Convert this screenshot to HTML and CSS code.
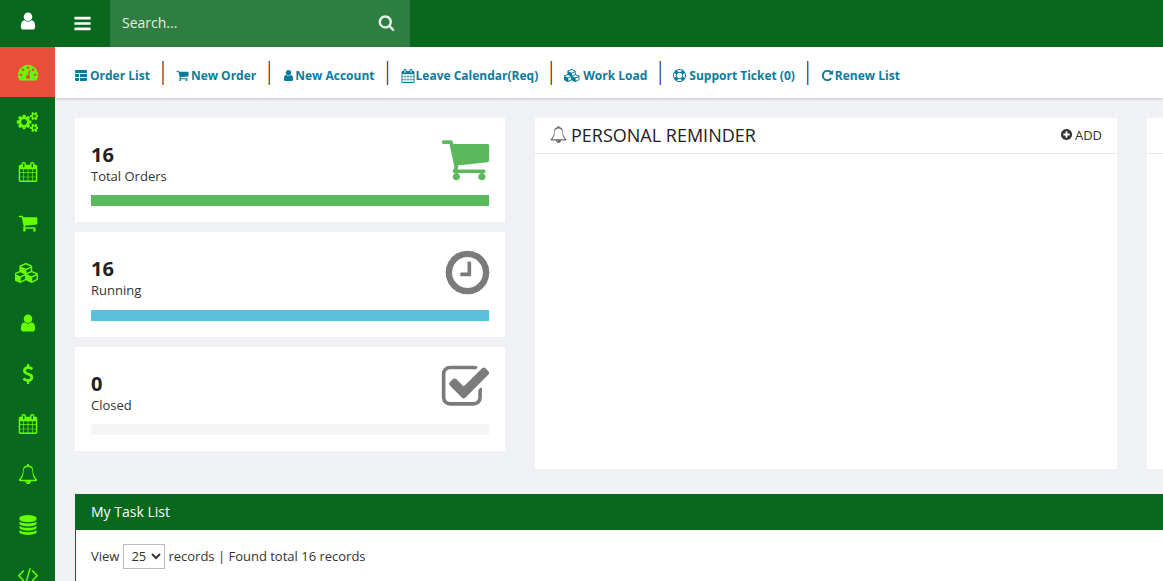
FILE: index.html
```html
<!DOCTYPE html>
<html lang="en">
<head>
    <meta charset="UTF-8">
    <title>Dashboard</title>
    <link rel="stylesheet" href="styles.css">
</head>
<body>

    <!-- icon set -->
    <svg class="icon-defs" xmlns="http://www.w3.org/2000/svg">
        <symbol id="i-user" viewBox="0 0 1792 1792"><path d="M1536 1399q0 109-62.5 187t-150.5 78h-854q-88 0-150.5-78t-62.5-187q0-85 8.5-160.5t31.5-152 58.5-131 94-89 134.5-34.5q131 128 313 128t313-128q76 0 134.5 34.5t94 89 58.5 131 31.5 152 8.5 160.5zm-256-887q0 159-112.5 271.5t-271.5 112.5-271.5-112.5-112.5-271.5 112.5-271.5 271.5-112.5 271.5 112.5 112.5 271.5z"/></symbol>
        <symbol id="i-bars" viewBox="0 0 1792 1792"><path d="M1664 1344v128q0 26-19 45t-45 19h-1408q-26 0-45-19t-19-45v-128q0-26 19-45t45-19h1408q26 0 45 19t19 45zm0-512v128q0 26-19 45t-45 19h-1408q-26 0-45-19t-19-45v-128q0-26 19-45t45-19h1408q26 0 45 19t19 45zm0-512v128q0 26-19 45t-45 19h-1408q-26 0-45-19t-19-45v-128q0-26 19-45t45-19h1408q26 0 45 19t19 45z"/></symbol>
        <symbol id="i-search" viewBox="0 0 1792 1792"><path d="M1216 832q0-185-131.5-316.5t-316.5-131.5-316.5 131.5-131.5 316.5 131.5 316.5 316.5 131.5 316.5-131.5 131.5-316.5zm512 832q0 52-38 90t-90 38q-54 0-90-38l-343-342q-179 124-399 124-143 0-273.5-55.5t-225-150-150-225-55.5-273.5 55.5-273.5 150-225 225-150 273.5-55.5 273.5 55.5 225 150 150 225 55.5 273.5q0 220-124 399l343 343q37 37 37 90z"/></symbol>
        <symbol id="i-cart" viewBox="0 0 1792 1792"><path d="M704 1536q0 52-38 90t-90 38-90-38-38-90 38-90 90-38 90 38 38 90zm896 0q0 52-38 90t-90 38-90-38-38-90 38-90 90-38 90 38 38 90zm128-1088v512q0 24-16.5 42.5t-40.5 21.5l-1044 122q13 60 13 70 0 16-24 64h920q26 0 45 19t19 45-19 45-45 19h-1024q-26 0-45-19t-19-45q0-11 8-31.5t16-36 21.5-40 15.5-29.5l-177-823h-204q-26 0-45-19t-19-45 19-45 45-19h256q16 0 28.5 6.5t19.5 15.5 13 24.5 8 26 5.5 29.5 4.5 26h1201q26 0 45 19t19 45z"/></symbol>
        <symbol id="i-calendar" viewBox="0 0 1792 1792"><path d="M192 1664h288v-288h-288v288zm352 0h320v-288h-320v288zm-352-352h288v-320h-288v320zm352 0h320v-320h-320v320zm-352-384h288v-288h-288v288zm736 736h320v-288h-320v288zm-384-736h320v-288h-320v288zm768 736h288v-288h-288v288zm-384-352h320v-320h-320v320zm-352-864v-288q0-13-9.5-22.5t-22.5-9.5h-64q-13 0-22.5 9.5t-9.5 22.5v288q0 13 9.5 22.5t22.5 9.5h64q13 0 22.5-9.5t9.5-22.5zm736 864h288v-320h-288v320zm-384-384h320v-288h-320v288zm384 0h288v-288h-288v288zm32-480v-288q0-13-9.5-22.5t-22.5-9.5h-64q-13 0-22.5 9.5t-9.5 22.5v288q0 13 9.5 22.5t22.5 9.5h64q13 0 22.5-9.5t9.5-22.5zm384-64v1280q0 52-38 90t-90 38h-1408q-52 0-90-38t-38-90v-1280q0-52 38-90t90-38h128v-96q0-66 47-113t113-47h64q66 0 113 47t47 113v96h384v-96q0-66 47-113t113-47h64q66 0 113 47t47 113v96h128q52 0 90 38t38 90z"/></symbol>
        <symbol id="i-check" viewBox="0 0 1792 1792"><path d="M1472 930v318q0 119-84.5 203.5t-203.5 84.5h-832q-119 0-203.5-84.5t-84.5-203.5v-832q0-119 84.5-203.5t203.5-84.5h832q63 0 117 25 15 7 18 23 3 17-9 29l-49 49q-10 10-23 10-3 0-9-2-23-6-45-6h-832q-66 0-113 47t-47 113v832q0 66 47 113t113 47h832q66 0 113-47t47-113v-254q0-13 9-22l64-64q10-10 23-10 6 0 12 3 20 8 20 29zm231-489l-814 814q-24 24-57 24t-57-24l-430-430q-24-24-24-57t24-57l110-110q24-24 57-24t57 24l263 263 647-647q24-24 57-24t57 24l110 110q24 24 24 57t-24 57z"/></symbol>
        <symbol id="i-clock" viewBox="0 0 1792 1792"><path d="M1024 544v448q0 14-9 23t-23 9h-320q-14 0-23-9t-9-23v-64q0-14 9-23t23-9h224v-352q0-14 9-23t23-9h64q14 0 23 9t9 23zm416 352q0-148-73-273t-198-198-273-73-273 73-198 198-73 273 73 273 198 198 273 73 273-73 198-198 73-273zm224 0q0 209-103 385.5t-279.5 279.5-385.5 103-385.5-103-279.5-279.5-103-385.5 103-385.5 279.5-279.5 385.5-103 385.5 103 279.5 279.5 103 385.5z"/></symbol>
        <symbol id="i-bell" viewBox="0 0 1792 1792"><path d="M912 1696q0-16-16-16-59 0-101.5-42.5t-42.5-101.5q0-16-16-16t-16 16q0 73 51.5 124.5t124.5 51.5q16 0 16-16zm-666-288h1300q-266-300-266-832 0-51-24-105t-69-103-121.5-80.5-169.5-31.5-169.5 31.5-121.5 80.5-69 103-24 105q0 532-266 832zm1482 0q0 52-38 90t-90 38h-448q0 106-75 181t-181 75-181-75-75-181h-448q-52 0-90-38t-38-90q190-161 287-397.5t97-498.5q0-165 96-262t264-117q-8-18-8-37 0-40 28-68t68-28 68 28 28 68q0 19-8 37 168 20 264 117t96 262q0 262 97 498.5t287 397.5z"/></symbol>
        <symbol id="i-database" viewBox="0 0 1792 1792"><path d="M896 768q237 0 443-43t325-127v170q0 69-103 128t-280 93.5-385 34.5-385-34.5-280-93.5-103-128v-170q119 84 325 127t443 43zm0 768q237 0 443-43t325-127v170q0 69-103 128t-280 93.5-385 34.5-385-34.5-280-93.5-103-128v-170q119 84 325 127t443 43zm0-384q237 0 443-43t325-127v170q0 69-103 128t-280 93.5-385 34.5-385-34.5-280-93.5-103-128v-170q119 84 325 127t443 43zm0-1152q208 0 385 34.5t280 93.5 103 128v128q0 69-103 128t-280 93.5-385 34.5-385-34.5-280-93.5-103-128v-128q0-69 103-128t280-93.5 385-34.5z"/></symbol>
        <symbol id="i-code" viewBox="0 0 1792 1792"><path d="M553 1399l-50 50q-10 10-23 10t-23-10l-466-466q-10-10-10-23t10-23l466-466q10-10 23-10t23 10l50 50q10 10 10 23t-10 23l-393 393 393 393q10 10 10 23t-10 23zm591-1067l-373 1291q-4 13-15.5 19.5t-23.5 2.5l-62-17q-13-4-19.5-15.5t-2.5-24.5l373-1291q4-13 15.5-19.5t23.5-2.5l62 17q13 4 19.5 15.5t2.5 24.5zm657 651l-466 466q-10 10-23 10t-23-10l-50-50q-10-10-10-23t10-23l393-393-393-393q-10-10-10-23t10-23l50-50q10-10 23-10t23 10l466 466q10 10 10 23t-10 23z"/></symbol>
        <symbol id="i-usd" viewBox="0 0 1792 1792"><path d="M1362 1185q0 153-99.5 263.5t-258.5 136.5v175q0 14-9 23t-23 9h-135q-13 0-22.5-9.5t-9.5-22.5v-175q-66-9-127.5-31t-101.5-44.5-74-48-46.5-37.5-17.5-18q-17-21-2-41l103-135q7-10 23-12 15-2 24 9l2 2q113 99 243 125 37 8 74 8 81 0 142.5-43t61.5-122q0-28-15-53t-33.5-42-58.5-37.5-66-32-80-32.5q-39-16-61.5-25t-61.5-26.5-62.5-31-56.5-35.5-53.5-42.5-43.5-49-35.5-58-21-66.5-8.5-78q0-138 98-242t255-134v-180q0-13 9.5-22.5t22.5-9.5h135q14 0 23 9t9 23v176q57 6 110.5 23t87 33.5 63.5 37.5 39 29 15 14q17 18 5 38l-81 146q-8 15-23 16-14 3-27-7-3-3-14.5-12t-39-26.5-58.5-32-74.5-26-85.5-11.5q-95 0-155 43t-60 111q0 26 8.5 48t29.5 41.5 39.5 33 56 31 60.5 27 70 27.5q53 20 81 31.5t76 35 75.5 42.5 62 50 53 63.5 31.5 76.5 13 94z"/></symbol>
        <symbol id="i-repeat" viewBox="0 0 1792 1792"><path d="M1664 256v448q0 26-19 45t-45 19h-448q-42 0-59-40-17-39 14-69l138-138q-148-137-349-137-104 0-198.5 40.5t-163.5 109.5-109.5 163.5-40.5 198.5 40.5 198.5 109.5 163.5 163.5 109.5 198.5 40.5q119 0 225-52t179-147q7-10 23-12 15 0 25 9l137 138q9 8 9.5 20.5t-7.5 22.5q-109 132-264 204.5t-327 72.5q-156 0-298-61t-245-164-164-245-61-298 61-298 164-245 245-164 298-61q147 0 284.5 55.5t244.5 156.5l130-129q29-31 70-14 39 17 39 59z"/></symbol>
        <symbol id="i-plus" viewBox="0 0 1792 1792"><path d="M1344 960v-128q0-26-19-45t-45-19h-256v-256q0-26-19-45t-45-19h-128q-26 0-45 19t-19 45v256h-256q-26 0-45 19t-19 45v128q0 26 19 45t45 19h256v256q0 26 19 45t45 19h128q26 0 45-19t19-45v-256h256q26 0 45-19t19-45zm320-64q0 209-103 385.5t-279.5 279.5-385.5 103-385.5-103-279.5-279.5-103-385.5 103-385.5 279.5-279.5 385.5-103 385.5 103 279.5 279.5 103 385.5z"/></symbol>
        <symbol id="i-ring" viewBox="0 0 1792 1792"><path d="M896 0q182 0 348 71t286 191 191 286 71 348-71 348-191 286-286 191-348 71-348-71-286-191-191-286-71-348 71-348 191-286 286-191 348-71zm0 128q-190 0-361 90l194 194q82-28 167-28t167 28l194-194q-171-90-361-90zm-678 1129l194-194q-28-82-28-167t28-167l-194-194q-90 171-90 361t90 361zm678 407q190 0 361-90l-194-194q-82 28-167 28t-167-28l-194 194q171 90 361 90zm0-384q159 0 271.5-112.5t112.5-271.5-112.5-271.5-271.5-112.5-271.5 112.5-112.5 271.5 112.5 271.5 271.5 112.5zm484-217l194 194q90-171 90-361t-90-361l-194 194q28 82 28 167t-28 167z"/></symbol>
        <symbol id="i-cubes" viewBox="0 0 2048 1792"><path d="M512 1632l384-192v-314l-384 164v342zm-64-454l404-173-404-173-404 173zm1088 454l384-192v-314l-384 164v342zm-64-454l404-173-404-173-404 173zm-448-293l384-165v-266l-384 164v267zm-64-379l441-189-441-189-441 189zm1088 518v416q0 36-19 67t-52 47l-448 224q-25 14-57 14t-57-14l-448-224q-4-2-7-4-2 2-7 4l-448 224q-25 14-57 14t-57-14l-448-224q-33-16-52-47t-19-67v-416q0-38 21.5-70t56.5-48l434-186v-400q0-38 21.5-70t56.5-48l448-192q23-10 50-10t50 10l448 192q35 16 56.5 48t21.5 70v400l434 186q36 16 57 48t21 70z"/></symbol>
        <symbol id="i-cogs" viewBox="0 0 1920 1792"><path d="M960 896q0-106-75-181t-181-75-181 75-75 181 75 181 181 75 181-75 75-181zm768 512q0-52-38-90t-90-38-90 38-38 90q0 53 37.5 90.5t90.5 37.5 90.5-37.5 37.5-90.5zm0-1024q0-52-38-90t-90-38-90 38-38 90q0 53 37.5 90.5t90.5 37.5 90.5-37.5 37.5-90.5zm-384 421v185q0 10-7 19.5t-16 10.5l-155 24q-11 35-32 76 34 48 90 115 7 11 7 20 0 12-7 19-23 30-82.5 89.5t-78.5 59.5q-11 0-21-7l-115-90q-37 19-77 31-11 108-23 155-7 24-30 24h-186q-11 0-20-7.5t-10-17.5l-23-153q-34-10-75-31l-118 89q-7 7-20 7-11 0-21-8-144-133-144-160 0-9 7-19 10-14 41-53t47-61q-23-44-35-82l-152-24q-10-1-17-9.5t-7-19.5v-185q0-10 7-19.5t16-10.5l155-24q11-35 32-76-34-48-90-115-7-11-7-20 0-12 7-20 22-30 82-89t79-59q11 0 21 7l115 90q34-18 77-32 11-108 23-154 7-24 30-24h186q11 0 20 7.5t10 17.5l23 153q34 10 75 31l118-89q8-7 20-7 11 0 21 8 144 133 144 160 0 8-7 19-12 16-42 54t-45 60q23 48 34 82l152 23q10 2 17 10.5t7 19.5zm640 533v140q0 16-149 31-12 27-30 52 51 113 51 138 0 4-4 7-122 71-124 71-8 0-46-47t-52-68q-20 2-30 2t-30-2q-14 21-52 68t-46 47q-2 0-124-71-4-3-4-7 0-25 51-138-18-25-30-52-149-15-149-31v-140q0-16 149-31 13-29 30-52-51-113-51-138 0-4 4-7 4-2 35-20t59-34 30-16q8 0 46 46.5t52 67.5q20-2 30-2t30 2q51-71 92-112l6-2q4 0 124 70 4 3 4 7 0 25-51 138 17 23 30 52 149 15 149 31zm0-1024v140q0 16-149 31-12 27-30 52 51 113 51 138 0 4-4 7-122 71-124 71-8 0-46-47t-52-68q-20 2-30 2t-30-2q-14 21-52 68t-46 47q-2 0-124-71-4-3-4-7 0-25 51-138-18-25-30-52-149-15-149-31v-140q0-16 149-31 13-29 30-52-51-113-51-138 0-4 4-7 4-2 35-20t59-34 30-16q8 0 46 46.5t52 67.5q20-2 30-2t30 2q51-71 92-112l6-2q4 0 124 70 4 3 4 7 0 25-51 138 17 23 30 52 149 15 149 31z"/></symbol>
        <symbol id="i-dash" viewBox="0 0 1792 1792"><path d="M384 1152q0-53-37.5-90.5t-90.5-37.5-90.5 37.5-37.5 90.5 37.5 90.5 90.5 37.5 90.5-37.5 37.5-90.5zm192-448q0-53-37.5-90.5t-90.5-37.5-90.5 37.5-37.5 90.5 37.5 90.5 90.5 37.5 90.5-37.5 37.5-90.5zm428 481l101-382q6-26-7.5-48.5t-38.5-29.5-48 6.5-30 39.5l-101 382q-60 5-107 43.5t-63 98.5q-20 77 20 146t117 89 146-20 89-117q16-60-6-117t-72-91zm660-33q0-53-37.5-90.5t-90.5-37.5-90.5 37.5-37.5 90.5 37.5 90.5 90.5 37.5 90.5-37.5 37.5-90.5zm-640-640q0-53-37.5-90.5t-90.5-37.5-90.5 37.5-37.5 90.5 37.5 90.5 90.5 37.5 90.5-37.5 37.5-90.5zm448 192q0-53-37.5-90.5t-90.5-37.5-90.5 37.5-37.5 90.5 37.5 90.5 90.5 37.5 90.5-37.5 37.5-90.5zm320 448q0 261-141 483-19 29-54 29h-1402q-35 0-54-29-141-221-141-483 0-182 71-348t191-286 286-191 348-71 348 71 286 191 191 286 71 348z"/></symbol>
        <symbol id="i-table" viewBox="0 0 12 11"><path d="M0 1q0-1 1-1h10q1 0 1 1v2h-12zM0 4h4v3h-4zM5 4h7v3h-7zM0 8h4v3h-3q-1 0-1-1zM5 8h7v2q0 1-1 1h-6z"/></symbol>
    </svg>

    <div class="topbar">
        <div class="brand"><svg class="ico ico-brand"><use href="#i-user"/></svg></div>
        <div class="menu-btn"><svg class="ico ico-bars"><use href="#i-bars"/></svg></div>
        <div class="search">
            <span>Search...</span>
            <svg class="ico ico-search"><use href="#i-search"/></svg>
        </div>
    </div>

    <div class="main">
        <div class="sidebar">
            <div class="side-item active"><svg class="ico"><use href="#i-dash"/></svg></div>
            <div class="side-item"><svg class="ico ico-cogs"><use href="#i-cogs"/></svg></div>
            <div class="side-item"><svg class="ico"><use href="#i-calendar"/></svg></div>
            <div class="side-item"><svg class="ico"><use href="#i-cart"/></svg></div>
            <div class="side-item"><svg class="ico ico-cubes"><use href="#i-cubes"/></svg></div>
            <div class="side-item"><svg class="ico"><use href="#i-user"/></svg></div>
            <div class="side-item"><svg class="ico"><use href="#i-usd"/></svg></div>
            <div class="side-item"><svg class="ico"><use href="#i-calendar"/></svg></div>
            <div class="side-item"><svg class="ico"><use href="#i-bell"/></svg></div>
            <div class="side-item"><svg class="ico"><use href="#i-database"/></svg></div>
            <div class="side-item"><svg class="ico"><use href="#i-code"/></svg></div>
        </div>

        <div class="content">
            <div class="subnav">
                <a class="sub-link"><svg class="ico ico-table"><use href="#i-table"/></svg>Order List</a>
                <span class="sep">|</span>
                <a class="sub-link"><svg class="ico"><use href="#i-cart"/></svg>New Order</a>
                <span class="sep">|</span>
                <a class="sub-link"><svg class="ico ico-tight"><use href="#i-user"/></svg>New Account</a>
                <span class="sep">|</span>
                <a class="sub-link"><svg class="ico ico-cal"><use href="#i-calendar"/></svg>Leave Calendar(Req)</a>
                <span class="sep">|</span>
                <a class="sub-link"><svg class="ico ico-wide"><use href="#i-cubes"/></svg>Work Load</a>
                <span class="sep">|</span>
                <a class="sub-link"><svg class="ico ico-ring"><use href="#i-ring"/></svg>Support Ticket (0)</a>
                <span class="sep">|</span>
                <a class="sub-link"><svg class="ico ico-repeat"><use href="#i-repeat"/></svg>Renew List</a>
            </div>

            <div class="dash-row">
                <div class="stats">
                    <div class="stat-card">
                        <div class="stat-top">
                            <div>
                                <div class="stat-num">16</div>
                                <div class="stat-label">Total Orders</div>
                            </div>
                            <svg class="ico stat-icon green"><use href="#i-cart"/></svg>
                        </div>
                        <div class="bar bar-green"></div>
                    </div>
                    <div class="stat-card">
                        <div class="stat-top">
                            <div>
                                <div class="stat-num">16</div>
                                <div class="stat-label">Running</div>
                            </div>
                            <svg class="ico stat-icon clock"><use href="#i-clock"/></svg>
                        </div>
                        <div class="bar bar-blue"></div>
                    </div>
                    <div class="stat-card">
                        <div class="stat-top">
                            <div>
                                <div class="stat-num">0</div>
                                <div class="stat-label">Closed</div>
                            </div>
                            <svg class="ico stat-icon"><use href="#i-check"/></svg>
                        </div>
                        <div class="bar"></div>
                    </div>
                </div>

                <div class="panel">
                    <div class="panel-head">
                        <h2><svg class="ico ico-bell"><use href="#i-bell"/></svg>PERSONAL REMINDER</h2>
                        <span class="add"><svg class="ico"><use href="#i-plus"/></svg>ADD</span>
                    </div>
                </div>

                <div class="panel panel-next">
                    <div class="panel-head"></div>
                </div>
            </div>

            <div class="task-box">
                <div class="task-head">My Task List</div>
                <div class="task-body">
                    <span>View</span>
                    <select class="task-select"><option>25</option></select>
                    <span>records | Found total 16 records</span>
                </div>
            </div>
        </div>
    </div>

</body>
</html>
```

FILE: styles.css
```css
* {
    box-sizing: border-box;
}

html,
body {
    height: 581px;
    overflow: hidden;
}

body {
    margin: 0;
    font-family: "Open Sans", sans-serif;
    font-size: 13px;
    color: #333;
    background-color: #f0f1f5;
}

.icon-defs {
    display: none;
}

.ico {
    display: block;
    flex: none;
    fill: currentColor;
}

/* top bar */
.topbar {
    display: flex;
    height: 47px;
    background-color: #08681d;
    color: #fff;
}

.brand {
    width: 55px;
    display: flex;
    align-items: center;
    justify-content: center;
}

.ico-brand {
    width: 20px;
    height: 20px;
    margin-top: -5px;
}

.menu-btn {
    width: 55px;
    display: flex;
    align-items: center;
    justify-content: center;
}

.ico-bars {
    width: 19px;
    height: 19px;
}

.search {
    width: 300px;
    padding: 0 15px 2px 12px;
    display: flex;
    align-items: center;
    justify-content: space-between;
    background-color: #2e7e41;
    font-size: 14px;
    color: #e4efe6;
}

.ico-search {
    width: 17px;
    height: 17px;
}

.main {
    display: flex;
    height: 534px;
}

/* sidebar */
.sidebar {
    width: 55px;
    flex: none;
    background-color: #08681d;
    color: #66ff00;
}

.side-item {
    height: 50.3px;
    display: flex;
    align-items: center;
    justify-content: center;
}

.side-item .ico {
    width: 20px;
    height: 20px;
}

.side-item .ico-cogs {
    width: 22px;
    height: 22px;
    margin-right: 2px;
}

.side-item .ico-cubes {
    width: 23px;
    height: 20px;
    margin-right: 2px;
}

.side-item.active {
    height: 50px;
    background-color: #e94e3d;
}

/* links under the top bar */
.content {
    flex: 1;
    min-width: 0;
    overflow: hidden;
}

.subnav {
    height: 51px;
    display: flex;
    align-items: center;
    padding: 6px 0 0 20px;
    background-color: #fff;
    box-shadow: 0 1px 3px rgba(0, 0, 0, 0.2);
}

.sub-link {
    display: flex;
    align-items: center;
    font-size: 12px;
    font-weight: 700;
    color: #0b7c9c;
    white-space: nowrap;
}

.sub-link .ico {
    width: 13px;
    height: 13px;
    margin-right: 2px;
}

.sub-link .ico-table {
    width: 12px;
    height: 11px;
    margin-right: 3px;
}

.sub-link .ico-tight {
    margin-right: 0;
}

.sub-link .ico-cal {
    width: 14px;
    height: 14px;
    margin-right: 1px;
}

.sub-link .ico-wide {
    width: 16px;
    margin-right: 3px;
}

.sub-link .ico-ring {
    margin-right: 3px;
}

.sub-link .ico-repeat {
    margin-right: 1px;
}

.sep {
    width: 26px;
    margin-top: -13px;
    text-align: center;
    font-size: 24px;
    font-weight: 300;
    line-height: 25px;
    color: #222;
}

/* stat cards and panels */
.dash-row {
    display: flex;
    align-items: flex-start;
    padding: 20px 0 0 20px;
}

.stats {
    width: 430px;
    flex: none;
    display: flex;
    flex-direction: column;
    gap: 10px;
}

.stat-card {
    height: 104.4px;
    padding: 16px 16px 0;
    background-color: #fff;
}

.stat-top {
    height: 61.2px;
    display: flex;
    justify-content: space-between;
    align-items: flex-start;
}

.stat-num {
    margin-top: 8px;
    font-size: 20px;
    font-weight: 700;
    line-height: 25px;
    color: #222;
}

.stat-label {
    margin-top: 1px;
    font-size: 13px;
    line-height: 17px;
}

.stat-icon {
    width: 51px;
    height: 51px;
    margin: -1px -2px 0 0;
    color: #7b7b7b;
}

.stat-icon.green {
    color: #5cb85c;
}

.stat-icon.clock {
    margin-right: -4px;
}

.bar {
    height: 11px;
    background-color: #f5f5f5;
}

.bar-green {
    background-color: #5cb85c;
}

.bar-blue {
    background-color: #5bc0de;
}

.panel {
    width: 582px;
    height: 351px;
    flex: none;
    margin-left: 30px;
    background-color: #fff;
}

.panel-head {
    height: 36px;
    display: flex;
    align-items: center;
    justify-content: space-between;
    padding: 0 15px 2px;
    border-bottom: 1px solid #e6e6e6;
}

.panel-head h2 {
    display: flex;
    align-items: center;
    margin: 0;
    font-size: 18px;
    font-weight: 400;
    color: #222;
}

.ico-bell {
    width: 17px;
    height: 17px;
    margin-right: 4px;
    color: #666;
}

.add {
    display: flex;
    align-items: center;
    font-size: 13px;
    color: #333;
}

.add .ico {
    width: 13px;
    height: 13px;
    margin-right: 2px;
}

/* task list */
.task-box {
    margin: 25px 0 0 20px;
    width: 1200px;
    background-color: #fff;
    border-left: 1px solid #08681d;
}

.task-head {
    height: 36px;
    padding-left: 15px;
    background-color: #08681d;
    color: #fff;
    font-size: 14px;
    font-weight: 400;
    line-height: 36px;
}

.task-body {
    display: flex;
    align-items: center;
    gap: 4px;
    height: 52px;
    padding-left: 15px;
    font-size: 13px;
}

.task-select {
    width: 42px;
    height: 25px;
    margin-right: -1px;
    padding-left: 3px;
    background-color: #fff;
    border: 1px solid #bbb;
    color: #333;
    font-family: "Open Sans", sans-serif;
    font-size: 13px;
}
```
